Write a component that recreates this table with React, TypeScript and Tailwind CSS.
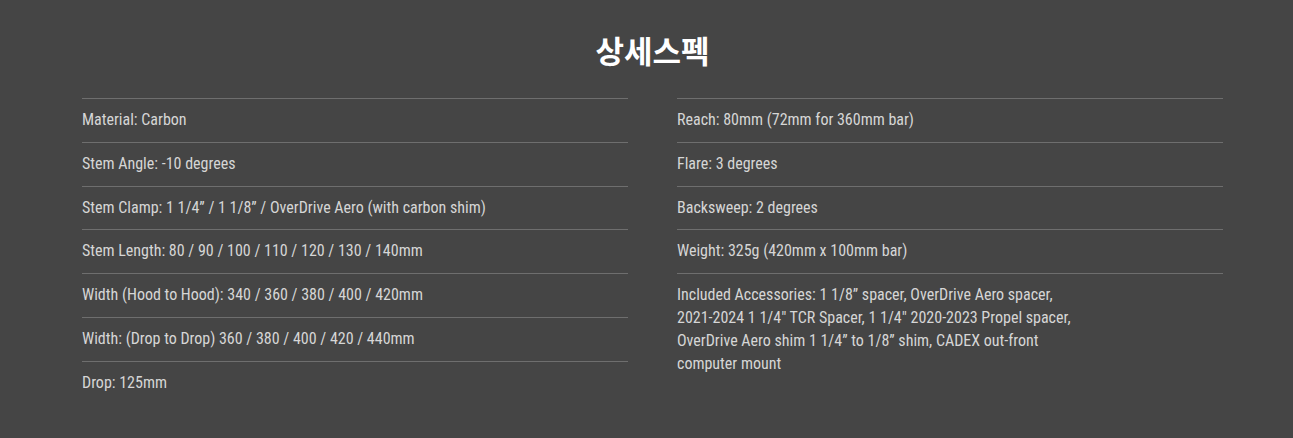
const left = [
  "Material: Carbon",
  "Stem Angle: -10 degrees",
  "Stem Clamp: 1 1/4” / 1 1/8” / OverDrive Aero (with carbon shim)",
  "Stem Length: 80 / 90 / 100 / 110 / 120 / 130 / 140mm",
  "Width (Hood to Hood): 340 / 360 / 380 / 400 / 420mm",
  "Width: (Drop to Drop) 360 / 380 / 400 / 420 / 440mm",
  "Drop: 125mm",
]

const right = [
  "Reach: 80mm (72mm for 360mm bar)",
  "Flare: 3 degrees",
  "Backsweep: 2 degrees",
  "Weight: 325g (420mm x 100mm bar)",
  "Included Accessories: 1 1/8” spacer, OverDrive Aero spacer, 2021-2024 1 1/4\" TCR Spacer, 1 1/4\" 2020-2023 Propel spacer, OverDrive Aero shim 1 1/4” to 1/8” shim, CADEX out-front computer mount",
]

const SpecList = ({ items }: { items: string[] }) => (
  <ul>
    {items.map((item) => (
      <li key={item} className="border-t border-[#6e6e6e] py-[10px] text-[16px] leading-[22.8px] text-[#d6d6d6] font-stretch-condensed">
        <span className="block max-w-[410px]">{item}</span>
      </li>
    ))}
  </ul>
)

const App = () => {
  return (
    <div className="min-h-[438px] bg-[#454545] pl-[82px] pr-[70px] font-['Roboto',sans-serif]">
      <h2 className="pt-[27px] pb-[25px] text-center text-[31px] font-bold leading-[46px] text-white font-['Noto_Sans_CJK_KR',sans-serif]">
        상세스펙
      </h2>
      <div className="grid grid-cols-2 gap-[49px]">
        <SpecList items={left} />
        <SpecList items={right} />
      </div>
    </div>
  )
}

export default App
